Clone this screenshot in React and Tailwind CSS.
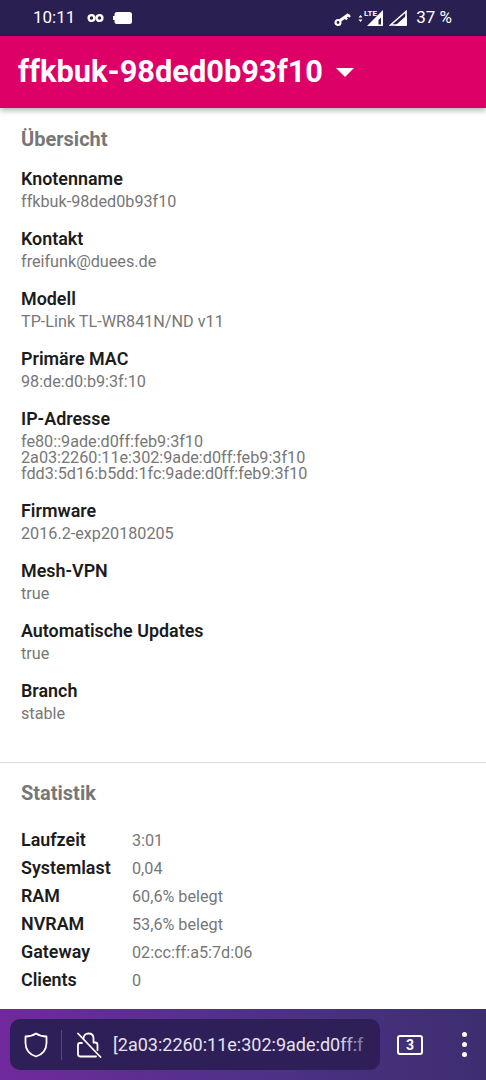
const overview = [
  { label: "Knotenname", lines: ["ffkbuk-98ded0b93f10"] },
  { label: "Kontakt", lines: ["freifunk@duees.de"] },
  { label: "Modell", lines: ["TP-Link TL-WR841N/ND v11"] },
  { label: "Primäre MAC", lines: ["98:de:d0:b9:3f:10"] },
  {
    label: "IP-Adresse",
    lines: [
      "fe80::9ade:d0ff:feb9:3f10",
      "2a03:2260:11e:302:9ade:d0ff:feb9:3f10",
      "fdd3:5d16:b5dd:1fc:9ade:d0ff:feb9:3f10"
    ]
  },
  { label: "Firmware", lines: ["2016.2-exp20180205"] },
  { label: "Mesh-VPN", lines: ["true"] },
  { label: "Automatische Updates", lines: ["true"] },
  { label: "Branch", lines: ["stable"] }
];

const stats = [
  ["Laufzeit", "3:01"],
  ["Systemlast", "0,04"],
  ["RAM", "60,6% belegt"],
  ["NVRAM", "53,6% belegt"],
  ["Gateway", "02:cc:ff:a5:7d:06"],
  ["Clients", "0"]
];

function StatusBar() {
  return (
    <div className="h-[36px] bg-[#291f50] flex items-center justify-between pl-[33px] pr-[34px] text-white text-[17px] shrink-0">
      <div className="flex items-center">
        <span>10:11</span>
        <svg width="17" height="10" viewBox="0 0 17 10" className="ml-[12px]" fill="none" stroke="white" strokeWidth="2.4">
          <circle cx="4.5" cy="5" r="2.9" />
          <circle cx="12.5" cy="5" r="2.9" />
        </svg>
        <svg width="19" height="12" viewBox="0 0 19 12" className="ml-[9px]" fill="white">
          <rect x="1.5" y="0" width="17.5" height="12" rx="2.5" />
          <rect x="0" y="4" width="2" height="4" />
        </svg>
      </div>
      <div className="flex items-center">
        <svg width="17" height="15" viewBox="0 0 17 15" className="mt-[3px]" fill="none" stroke="white">
          <circle cx="4" cy="10.5" r="2.5" strokeWidth="2.2" />
          <path d="M6 8.5 L14.5 2.5" strokeWidth="2.8" />
          <path d="M11 5 L13 7.5 M14 2.5 L16 5" strokeWidth="2.4" />
        </svg>
        <svg width="26" height="18" viewBox="0 0 26 18" className="ml-[7px]" fill="white">
          <path d="M0.5 8.5 L2.5 6 L4.5 8.5 Z M0.5 10.5 L4.5 10.5 L2.5 13 Z" />
          <text x="6" y="7" fontSize="8" fontWeight="700" fill="white" fontFamily="Roboto, sans-serif">LTE</text>
          <path d="M9 17 L25 1 L25 17 Z" />
          <path d="M20.5 11 L23 8.5 L23 15.5 L20.5 15.5 Z" fill="#291f50" />
        </svg>
        <svg width="18" height="16" viewBox="0 0 18 16" className="ml-[5px]" fill="none" stroke="white" strokeWidth="1.6">
          <path d="M1.5 15 L17 1.5 L17 15 Z" />
          <path d="M8 15 L13 10.5 L17 7 L17 15 Z" fill="white" />
        </svg>
        <span className="ml-[9px]">37 %</span>
      </div>
    </div>
  );
}

function Header() {
  return (
    <div className="relative z-10 h-[72px] bg-[#dc0067] flex items-center pl-[18px] shrink-0 shadow-[0_2px_6px_rgba(0,0,0,0.35)]">
      <span className="text-white font-bold text-[30.8px] leading-none">ffkbuk-98ded0b93f10</span>
      <svg width="18" height="9" viewBox="0 0 18 9" className="ml-[13px] mt-[1px]" fill="white">
        <path d="M0 0 L18 0 L9 9 Z" />
      </svg>
    </div>
  );
}

function BottomBar() {
  return (
    <div className="h-[71px] shrink-0 bg-gradient-to-r from-[#70299c] via-[#4f3189] to-[#3d2e70] flex items-center pl-[10px]">
      <div className="w-[370px] h-[51px] rounded-[10px] bg-[#2e1f58] flex items-center overflow-hidden">
        <svg width="24" height="26" viewBox="0 0 24 26" className="ml-[14px] shrink-0" fill="none" stroke="white" strokeWidth="1.8" strokeLinejoin="round">
          <path d="M12 1.5 C15 3.5 19 4.5 22.5 4.5 L22.5 11 C22.5 18 18 22.5 12 24.5 C6 22.5 1.5 18 1.5 11 L1.5 4.5 C5 4.5 9 3.5 12 1.5 Z" />
        </svg>
        <div className="w-[1px] h-[30px] bg-[#54497a] ml-[13px] shrink-0" />
        <svg width="26" height="26" viewBox="0 0 26 26" className="ml-[14px] shrink-0" fill="none" stroke="white" strokeWidth="1.8" strokeLinecap="round" strokeLinejoin="round">
          <path d="M2 1.5 L24.5 25" />
          <path d="M7.5 6.5 C7.5 3.5 9.5 1.5 12.5 1.5 C15.5 1.5 17.5 3.5 17.5 6.5 L17.5 10.5 L19 10.5 C20.5 10.5 21.5 11.5 21.5 13 L21.5 18" />
          <path d="M6 11 L4 11 C2.8 11 2 12 2 13 L2 22 C2 23.2 3 24.5 4.5 24.5 L20 24.5" />
        </svg>
        <div className="relative ml-[11px] flex-1 overflow-hidden whitespace-nowrap text-[#e6e2f0] text-[18px]">
          [2a03:2260:11e:302:9ade:d0ff:f
          <div className="absolute right-0 top-0 bottom-0 w-[40px] bg-gradient-to-r from-transparent to-[#2e1f58]" />
        </div>
      </div>
      <div className="ml-[17px] w-[26px] h-[20px] border-2 border-white rounded-[3px] flex items-center justify-center text-white text-[14px] leading-none font-bold">3</div>
      <div className="ml-[39px] flex flex-col gap-[5px]">
        <div className="w-[5px] h-[5px] rounded-full bg-white" />
        <div className="w-[5px] h-[5px] rounded-full bg-white" />
        <div className="w-[5px] h-[5px] rounded-full bg-white" />
      </div>
    </div>
  );
}

export default function App() {
  return (
    <div className="w-[486px] h-[1080px] flex flex-col bg-white overflow-hidden font-['Roboto',sans-serif]">
      <StatusBar />
      <Header />
      <div className="flex-1 flex flex-col overflow-hidden">
        <div className="pl-[21px] pt-[19px] pb-[40px] border-b border-[#dddddd]">
          <h2 className="text-[20px] leading-[24px] font-bold text-[#777777] mb-[17px]">Übersicht</h2>
          <div className="flex flex-col gap-[18px]">
            {overview.map((item) => (
              <div key={item.label}>
                <div className="text-[17.9px] leading-[22px] font-semibold text-[#1c1c1c]">{item.label}</div>
                <div className="mt-[1px] pt-[3px] text-[16.2px] leading-[16px] text-[#777777]">
                  {item.lines.map((line) => (
                    <div key={line}>{line}</div>
                  ))}
                </div>
              </div>
            ))}
          </div>
        </div>
        <div className="pl-[21px] pt-[18px]">
          <h2 className="text-[20px] leading-[24px] font-bold text-[#777777] mb-[22px]">Statistik</h2>
          <div className="flex flex-col">
            {stats.map(([label, value]) => (
              <div key={label} className="flex h-[28px] items-baseline">
                <div className="w-[111px] text-[17.9px] font-semibold text-[#1c1c1c]">{label}</div>
                <div className="text-[16.2px] text-[#777777]">{value}</div>
              </div>
            ))}
          </div>
        </div>
      </div>
      <BottomBar />
    </div>
  );
}
